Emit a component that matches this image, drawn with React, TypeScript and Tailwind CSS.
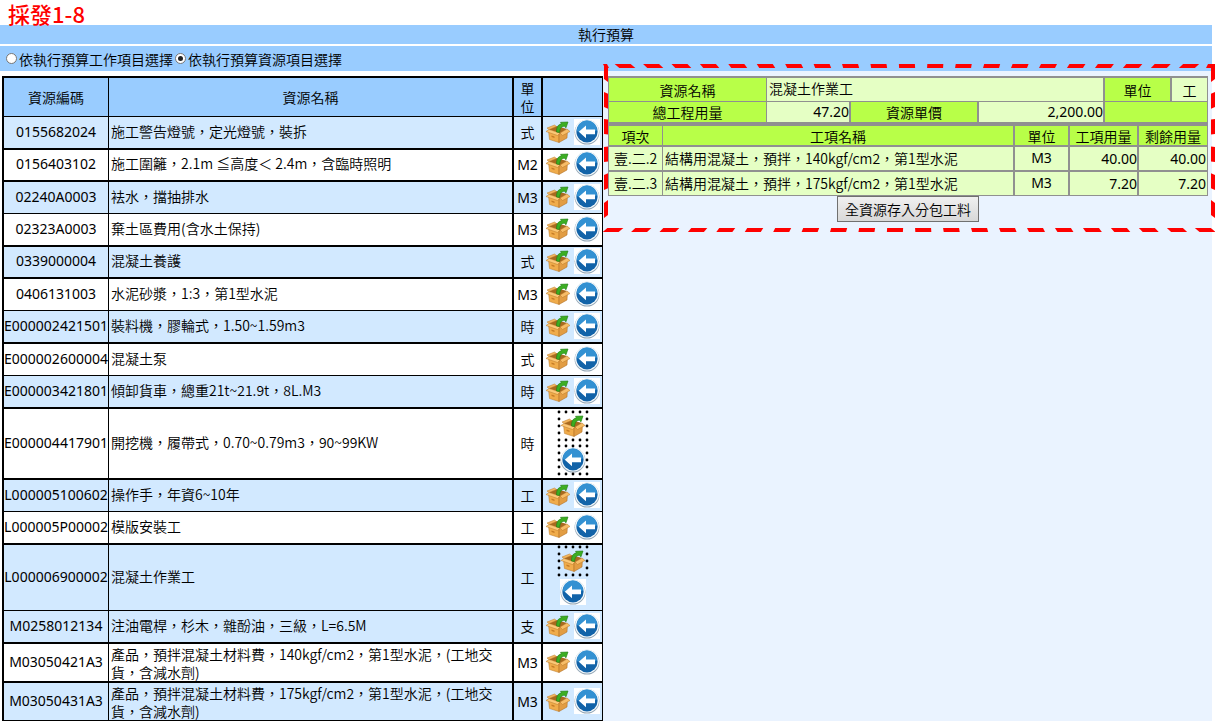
import React from "react";

type Row = { code: string; name: string; unit: string; tint: boolean; size: string; line: string; marks?: "both" | "box" };

const rows: Row[] = [
  { code: "0155682024", name: "施工警告燈號，定光燈號，裝拆", unit: "式", tint: true, size: "h-[33px]", line: "border-b-2" },
  { code: "0156403102", name: "施工圍籬，2.1m ≦高度＜ 2.4m，含臨時照明", unit: "M2", tint: false, size: "h-[32px]", line: "border-b-2" },
  { code: "02240A0003", name: "袪水，擋抽排水", unit: "M3", tint: true, size: "h-[32px]", line: "border-b" },
  { code: "02323A0003", name: "棄土區費用(含水土保持)", unit: "M3", tint: false, size: "h-[33px]", line: "border-b-2" },
  { code: "0339000004", name: "混凝土養護", unit: "式", tint: true, size: "h-[32px]", line: "border-b-2" },
  { code: "0406131003", name: "水泥砂漿，1:3，第1型水泥", unit: "M3", tint: false, size: "h-[32px]", line: "border-b" },
  { code: "E000002421501", name: "裝料機，膠輪式，1.50~1.59m3", unit: "時", tint: true, size: "h-[33px]", line: "border-b-2" },
  { code: "E000002600004", name: "混凝土泵", unit: "式", tint: false, size: "h-[32px]", line: "border-b" },
  { code: "E000003421801", name: "傾卸貨車，總重21t~21.9t，8L.M3", unit: "時", tint: true, size: "h-[33px]", line: "border-b-2" },
  { code: "E000004417901", name: "開挖機，履帶式，0.70~0.79m3，90~99KW", unit: "時", tint: false, size: "h-[71px]", line: "border-b-2", marks: "both" },
  { code: "L000005100602", name: "操作手，年資6~10年", unit: "工", tint: true, size: "h-[32px]", line: "border-b" },
  { code: "L000005P00002", name: "模版安裝工", unit: "工", tint: false, size: "h-[33px]", line: "border-b-2" },
  { code: "L000006900002", name: "混凝土作業工", unit: "工", tint: true, size: "h-[66px]", line: "border-b", marks: "box" },
  { code: "M0258012134", name: "注油電桿，杉木，雜酚油，三級，L=6.5M", unit: "支", tint: true, size: "h-[33px]", line: "border-b-2" },
  { code: "M03050421A3", name: "產品，預拌混凝土材料費，140kgf/cm2，第1型水泥，(工地交貨，含減水劑)", unit: "M3", tint: false, size: "h-[39px]", line: "border-b-2" },
  { code: "M03050431A3", name: "產品，預拌混凝土材料費，175kgf/cm2，第1型水泥，(工地交貨，含減水劑)", unit: "M3", tint: true, size: "h-[39px]", line: "border-b-2" },
];

const items = [
  { no: "壹.二.2", name: "結構用混凝土，預拌，140kgf/cm2，第1型水泥", unit: "M3", qty: "40.00", left: "40.00" },
  { no: "壹.二.3", name: "結構用混凝土，預拌，175kgf/cm2，第1型水泥", unit: "M3", qty: "7.20", left: "7.20" },
];

function BoxIcon() {
  return (
    <svg viewBox="0 0 24 22" className="block h-[22px] w-6" aria-hidden="true">
      <path d="M3 8.500 10 5l11 3-7 5z" fill="#a8691f" />
      <path d="M2.500 10 13 13v8.500L3.500 18.500z" fill="#f0ac4b" stroke="#b87828" strokeWidth=".5" />
      <path d="M13 13l8.500-4-.5 8-8 4.500z" fill="#e29d43" stroke="#a9671c" strokeWidth=".5" />
      <path d="M3 8.500 0 10.500l11.500 4L14 12z" fill="#fbc878" stroke="#b87828" strokeWidth=".5" />
      <path d="M14 12l2.500 2.500 7.500-4-3-2.500z" fill="#f7bd67" stroke="#b87828" strokeWidth=".5" />
      <path d="M3 8.500 1 7l7.500-3L10.500 5.500z" fill="#f5b75e" stroke="#b87828" strokeWidth=".5" />
      <path d="m5.500 14.500 3 1v1.500l-3-1z" fill="#c67c26" />
      <path d="M10.500 11C10.500 6 12 3.500 15.500 2.800L14.500 1.300 22 1 20 6.800 18.300 5.200c-2.800.3-4.300 2-4.800 6.300z" fill="#3cae22" stroke="#1f7a14" strokeWidth=".6" />
    </svg>
  );
}

function ArrowIcon() {
  return (
    <svg viewBox="0 0 26 26" className="block size-[26px] bg-white" aria-hidden="true">
      <circle cx="13" cy="13.2" r="12.400" fill="#93a6b5" />
      <circle cx="13" cy="12.6" r="12" fill="#f4f9fc" />
      <circle cx="13" cy="12.8" r="10.6" fill="#1263a8" />
      <path d="M2.800 12a10.200 10.200 0 0 1 20.400-1c-5 4-14 4-20.400 1z" fill="#3391d2" />
      <path d="M4.800 12.800l7.200-6.300v4h9v4.700h-9v4z" fill="#fff" />
    </svg>
  );
}

function DotFrame() {
  return (
    <svg viewBox="0 0 32 32" className="pointer-events-none absolute -inset-[2px] size-8" aria-hidden="true">
      <rect x="2" y="2" width="28" height="28" fill="none" stroke="#000" strokeWidth="2.800" strokeLinecap="round" strokeDasharray="0 7" />
    </svg>
  );
}

function Actions({ marks }: { marks?: "both" | "box" }) {
  if (!marks) {
    return (
      <div className="flex items-center justify-center gap-1 pb-[2px]">
        <button type="button" aria-label="資源"><BoxIcon /></button>
        <button type="button" aria-label="選取"><ArrowIcon /></button>
      </div>
    );
  }
  return (
    <div className={`flex flex-col items-center pb-[2px] ${marks === "both" ? "gap-[6px]" : "gap-[3px]"}`}>
      <button type="button" aria-label="資源" className="relative grid size-7 place-items-center"><BoxIcon /><DotFrame /></button>
      <button type="button" aria-label="選取" className="relative grid size-7 place-items-center"><ArrowIcon />{marks === "both" && <DotFrame />}</button>
    </div>
  );
}

function DashedFrame() {
  const across = Array.from({ length: 22 }, (_, i) => i * 28.2);
  const side = [0, 28, 55, 83, 111, 139];
  return (
    <svg viewBox="0 0 612 168" preserveAspectRatio="none" className="pointer-events-none absolute -top-[7px] left-0 h-[168px] w-[calc(100%+3px)]" fill="#f00" aria-hidden="true">
      <path d="M0 0h4l2 4h-4z" />
      <path d="M605 0h7v4h-9z" />
      {across.map((x, i) => {
        const s = (10.5 - i) * 0.45;
        return (
          <g key={x}>
            {i < 21 && <path d={`M${x + 14 - s / 2} 0h16l${s} 4h-16z`} />}
            <path d={`M${x + 2 + s / 2} 164h16l${-s} 4h-16z`} />
          </g>
        );
      })}
      {side.map((y, i) => {
        const s = (2.5 - i) * 1.2;
        return (
          <g key={y}>
            <path d={`M1 ${y}l4 ${s}v15l-4 ${-s}z`} />
            <path d={`M608 ${y + s}l4 ${-s}v15l-4 ${s}z`} />
          </g>
        );
      })}
    </svg>
  );
}

const radio = "grid size-[11px] appearance-none place-items-center rounded-full border border-[#777] bg-white before:size-[5px] before:rounded-full checked:before:bg-[#222]";
const latin = "font-['Noto_Sans','Noto_Sans_CJK_TC',sans-serif] font-normal";
const latinUnit = "font-['Noto_Sans','Noto_Sans_CJK_TC',sans-serif]";

const unitFont = (unit: string) => (unit.startsWith("M") ? latin : latinUnit);

export default function App() {
  const g = "border-[#909090]";
  return (
    <main className="min-h-screen bg-white pr-[6px] font-['Noto_Sans_CJK_TC',sans-serif] text-[14px] leading-[18px] font-[350] text-black">
      <h1 className="h-[25px] pt-px pl-2 text-[22px] leading-6 font-medium text-[#f00]">採發1-8</h1>
      <h2 className="h-[19px] bg-[#99ccff] text-center text-[14px] font-[350]">執行預算</h2>
      <form className="mt-[2px] flex h-[25px] items-center gap-[2px] bg-[#99ccff] pl-[6px]">
        <label className="flex items-center gap-[2px]"><input type="radio" name="mode" className={radio} />依執行預算工作項目選擇</label>
        <label className="flex items-center gap-[2px]"><input type="radio" name="mode" defaultChecked className={radio} />依執行預算資源項目選擇</label>
      </form>
      <div className="grid grid-cols-[603fr_609fr]">
        <div className="h-[650px] overflow-hidden pt-[5px] pl-[2px]">
          <table className="w-full table-fixed border-separate border-spacing-0 border-t-2 border-l-2 border-black">
            <colgroup>
              <col className="w-[105px]" /><col /><col className="w-[29px]" /><col className="w-[60px]" />
            </colgroup>
            <thead className="bg-[#99ccff]">
              <tr className="h-[39px]">
                <th className="border-r border-b border-black p-0 font-[350]">資源編碼</th>
                <th className="border-r-2 border-b border-black p-0 font-[350]">資源名稱</th>
                <th className="border-r-2 border-b border-black px-[6px] py-0 font-[350]">單位</th>
                <th className="border-r border-b border-black p-0" aria-label="操作" />
              </tr>
            </thead>
            <tbody>
              {rows.map((r) => (
                <tr key={r.code} className={`${r.size} ${r.tint ? "bg-[#d2e9ff]" : "bg-white"}`}>
                  <td className={`border-r border-black p-0 pb-[2px] text-center whitespace-nowrap ${latin} ${r.line}`}>{r.code}</td>
                  <td className={`border-r-2 border-black p-0 pl-[2px] ${r.size === "h-[39px]" ? "pr-3" : "pb-1"} ${r.line}`}>{r.name}</td>
                  <td className={`border-r-2 border-black p-0 text-center ${unitFont(r.unit)} ${r.line}`}>{r.unit}</td>
                  <td className={`border-r border-black p-0 ${r.line}`}><Actions marks={r.marks} /></td>
                </tr>
              ))}
            </tbody>
          </table>
        </div>
        <section className="relative bg-[#eaf3ff] pt-[5px] pr-1 pl-[5px]">
          <table className={`w-full table-fixed border-separate border-spacing-0 border-t-2 border-l ${g}`}>
            <colgroup>
              <col className="w-[158px]" /><col className="w-[84px]" /><col /><col className="w-[126px]" /><col className="w-[67px]" /><col className="w-[36px]" />
            </colgroup>
            <tbody className="bg-[#e5ffc4]">
              <tr className="h-6">
                <th className={`border-r border-b bg-[#b8ff48] p-0 font-[350] ${g}`}>資源名稱</th>
                <td colSpan={3} className={`border-r-2 border-b p-0 pb-1 pl-[2px] ${g}`}>混凝土作業工</td>
                <th className={`border-r-2 border-b bg-[#b8ff48] p-0 font-[350] ${g}`}>單位</th>
                <td className={`border-r border-b p-0 text-center ${g}`}>工</td>
              </tr>
              <tr className="h-[22px]">
                <th className={`border-r border-b-2 bg-[#b8ff48] p-0 font-[350] ${g}`}>總工程用量</th>
                <td className={`border-r-2 border-b-2 p-0 text-right ${latin} ${g}`}>47.20</td>
                <th className={`border-r-2 border-b-2 bg-[#b8ff48] p-0 font-[350] ${g}`}>資源單價</th>
                <td className={`border-r-2 border-b-2 p-0 text-right ${latin} ${g}`}>2,200.00</td>
                <td colSpan={2} className={`border-r border-b-2 bg-[#b8ff48] p-0 ${g}`} />
              </tr>
            </tbody>
          </table>
          <table className={`w-full table-fixed border-separate border-spacing-0 border-t-2 border-l ${g}`}>
            <colgroup>
              <col className="w-[54px]" /><col /><col className="w-[55px]" /><col className="w-[69px]" /><col className="w-[69px]" />
            </colgroup>
            <thead className="bg-[#b8ff48]">
              <tr className="h-[21px]">
                <th className={`border-r border-b-2 p-0 font-[350] ${g}`}>項次</th>
                <th className={`border-r-2 border-b-2 p-0 font-[350] ${g}`}>工項名稱</th>
                <th className={`border-r-2 border-b-2 p-0 font-[350] ${g}`}>單位</th>
                <th className={`border-r-2 border-b-2 p-0 font-[350] ${g}`}>工項用量</th>
                <th className={`border-r border-b-2 p-0 font-[350] ${g}`}>剩餘用量</th>
              </tr>
            </thead>
            <tbody className="bg-[#e5ffc4]">
              {items.map((it, i) => {
                const b = i === items.length - 1 ? "border-b h-6" : "border-b-2 h-[25px]";
                return (
                  <tr key={it.no}>
                    <td className={`border-r p-0 pb-[2px] text-center ${b} ${g}`}>{it.no}</td>
                    <td className={`border-r-2 p-0 pb-[2px] pl-[2px] ${b} ${g}`}>{it.name}</td>
                    <td className={`border-r-2 p-0 pb-[2px] text-center ${latin} ${b} ${g}`}>{it.unit}</td>
                    <td className={`border-r-2 p-0 text-right ${latin} ${b} ${g}`}>{it.qty}</td>
                    <td className={`border-r p-0 pr-px text-right ${latin} ${b} ${g}`}>{it.left}</td>
                  </tr>
                );
              })}
            </tbody>
          </table>
          <button type="button" className="mx-auto block h-[26px] border border-[#707070] bg-linear-to-b from-[#f0f0f0] to-[#d8d8d8] px-[7px]">全資源存入分包工料</button>
          <DashedFrame />
        </section>
      </div>
    </main>
  );
}
